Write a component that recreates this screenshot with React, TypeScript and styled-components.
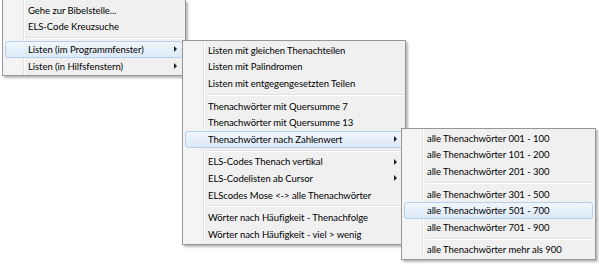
import React from "react";
import styled, { createGlobalStyle, css } from "styled-components";

const GlobalStyle = createGlobalStyle`
  html, body { margin: 0; padding: 0; background: #ffffff; }
  body { font-family: "Lato", "Noto Sans", sans-serif; }
`;

const Stage = styled.div`
  position: relative;
  width: 599px;
  height: 265px;
  overflow: hidden;
  background: #ffffff;
`;

const Menu = styled.div<{ $left: number; $top: number; $width: number; $open?: boolean }>`
  position: absolute;
  left: ${(p) => p.$left}px;
  top: ${(p) => p.$top}px;
  width: ${(p) => p.$width}px;
  box-sizing: border-box;
  border: 1px solid #979797;
  ${(p) => p.$open && css`border-top: none;`}
  padding: ${(p) => (p.$open ? "2px 0 1px" : "1px 0")};
  background: linear-gradient(
    to right,
    #f4f4f4 0 20px,
    #e2e3e3 20px 21px,
    #ffffff 21px 22px,
    #f0f0f0 22px
  );
  box-shadow: 2px 2px 2px rgba(0, 0, 0, 0.28);
  display: flex;
  flex-direction: column;
`;

const Item = styled.div<{ $active?: boolean }>`
  position: relative;
  height: 16.6px;
  margin: 0 2px;
  box-sizing: border-box;
  border: 1px solid transparent;
  border-radius: 3px;
  padding-left: 22px;
  display: flex;
  align-items: center;
  font-size: 9.5px;
  letter-spacing: -0.05px;
  color: #000000;
  white-space: nowrap;
  ${(p) =>
    p.$active &&
    css`
      border-color: #b4d0ec;
      background: linear-gradient(#f1f7fd, #dce9f7);
    `}
`;

const Arrow = styled.span`
  position: absolute;
  right: 5px;
  top: 50%;
  margin-top: -3px;
  width: 0;
  height: 0;
  border-top: 3px solid transparent;
  border-bottom: 3px solid transparent;
  border-left: 3px solid #222;
`;

const Separator = styled.div`
  height: 6px;
  margin-left: 23px;
  margin-right: 1px;
  display: flex;
  flex-direction: column;
  justify-content: center;
  &::before {
    content: "";
    display: block;
    height: 1px;
    background: #e0e0e0;
  }
  &::after {
    content: "";
    display: block;
    height: 1px;
    background: #ffffff;
  }
`;

type Entry = { label?: string; sub?: boolean; active?: boolean; sep?: boolean };

const menu1: Entry[] = [
  { label: "Gehe zur Bibelstelle..." },
  { label: "ELS-Code Kreuzsuche" },
  { sep: true },
  { label: "Listen (im Programmfenster)", sub: true, active: true },
  { label: "Listen (in Hilfsfenstern)", sub: true },
];

const menu2: Entry[] = [
  { label: "Listen mit gleichen Thenachteilen" },
  { label: "Listen mit Palindromen" },
  { label: "Listen mit entgegengesetzten Teilen" },
  { sep: true },
  { label: "Thenachwörter mit Quersumme 7" },
  { label: "Thenachwörter mit Quersumme 13" },
  { label: "Thenachwörter nach Zahlenwert", sub: true, active: true },
  { sep: true },
  { label: "ELS-Codes Thenach vertikal", sub: true },
  { label: "ELS-Codelisten ab Cursor", sub: true },
  { label: "ELScodes Mose <-> alle Thenachwörter" },
  { sep: true },
  { label: "Wörter nach Häufigkeit - Thenachfolge" },
  { label: "Wörter nach Häufigkeit - viel > wenig" },
];

const menu3: Entry[] = [
  { label: "alle Thenachwörter 001 - 100" },
  { label: "alle Thenachwörter 101 - 200" },
  { label: "alle Thenachwörter 201 - 300" },
  { sep: true },
  { label: "alle Thenachwörter 301 - 500" },
  { label: "alle Thenachwörter 501 - 700", active: true },
  { label: "alle Thenachwörter 701 - 900" },
  { sep: true },
  { label: "alle Thenachwörter mehr als 900" },
];

const renderEntries = (entries: Entry[]) =>
  entries.map((e, i) =>
    e.sep ? (
      <Separator key={i} />
    ) : (
      <Item key={i} $active={e.active}>
        {e.label}
        {e.sub && <Arrow />}
      </Item>
    )
  );

export default function App() {
  return (
    <>
      <GlobalStyle />
      <Stage>
        <Menu $left={2} $top={0} $width={184} $open>
          {renderEntries(menu1)}
        </Menu>
        <Menu $left={182} $top={40} $width={224}>
          {renderEntries(menu2)}
        </Menu>
        <Menu $left={401} $top={128} $width={195}>
          {renderEntries(menu3)}
        </Menu>
      </Stage>
    </>
  );
}
